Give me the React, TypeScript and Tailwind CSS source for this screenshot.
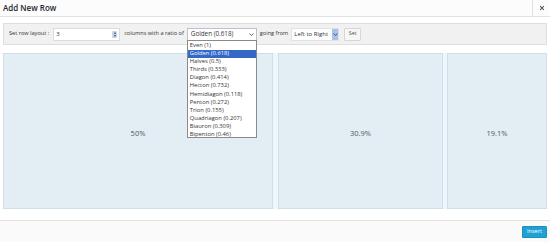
import React from "react";

const ratios = [
  "Even (1)",
  "Golden (0.618)",
  "Halves (0.5)",
  "Thirds (0.333)",
  "Diagon (0.414)",
  "Hecton (0.732)",
  "Hemidiagon (0.118)",
  "Penton (0.272)",
  "Trion (0.155)",
  "Quadriagon (0.207)",
  "Biauron (0.309)",
  "Bipenton (0.46)",
];

function Chevron({ className }: { className?: string }) {
  return (
    <svg viewBox="0 0 8 8" className={className} width="5" height="5">
      <path d="M1 2.5 L4 5.5 L7 2.5" fill="none" stroke="currentColor" strokeWidth="1.6" />
    </svg>
  );
}

export default function App() {
  return (
    <div
      className="w-[550px] h-[242px] bg-white flex flex-col overflow-hidden text-[#333]"
      style={{ fontFamily: '"Open Sans", "Noto Sans", sans-serif' }}
    >
      {/* Header */}
      <div className="h-[17px] shrink-0 flex items-stretch border-b border-[#e2e2e2] bg-[#fcfcfc]">
        <div className="flex-1 pl-[3px] flex items-center text-[8px] font-semibold text-[#23282d] leading-none">
          Add New Row
        </div>
        <div className="w-[18px] border-l border-[#e2e2e2] flex items-center justify-center text-[#555]">
          <svg viewBox="0 0 8 8" width="6" height="6">
            <path d="M1.5 1.5 L6.5 6.5 M6.5 1.5 L1.5 6.5" stroke="currentColor" strokeWidth="1.4" />
          </svg>
        </div>
      </div>

      {/* Toolbar */}
      <div className="mx-[3px] mt-[6px] h-[22px] shrink-0 border border-[#dedede] bg-[#f1f1f1] flex items-center text-[5.6px] leading-none pl-[5px]">
        <span>Set row layout :</span>
        <div className="ml-[4px] w-[67px] h-[13px] bg-white border border-[#dcdcdc] flex items-center pl-[2px] pr-[2px] justify-between">
          <span className="text-[6px]">3</span>
          <div className="w-[5px] h-[7px] rounded-[1px] bg-[#c9d6e6] flex flex-col items-center justify-center gap-[1px]">
            <div className="w-0 h-0 border-l-[1.5px] border-r-[1.5px] border-b-[2px] border-l-transparent border-r-transparent border-b-[#33506f]" />
            <div className="w-0 h-0 border-l-[1.5px] border-r-[1.5px] border-t-[2px] border-l-transparent border-r-transparent border-t-[#33506f]" />
          </div>
        </div>
        <span className="ml-[4px]">columns with a ratio of</span>
        <div className="relative ml-[3px]">
          <div className="w-[70px] h-[13px] bg-white border border-[#b9c3d0] flex items-center justify-between pl-[3px] pr-[1px]">
            <span className="text-[6.3px]">Golden (0.618)</span>
            <div className="w-[6px] h-[9px] flex items-center justify-center text-[#4a6a98]">
              <Chevron />
            </div>
          </div>
          <div className="absolute left-0 top-[12px] w-[70px] h-[98px] bg-white border border-[#8a8a8a] z-10 flex flex-col pt-[1px]">
            {ratios.map((r) => (
              <div
                key={r}
                className={
                  "h-[8.15px] shrink-0 flex items-center pl-[2px] text-[5.8px] leading-none " +
                  (r === "Golden (0.618)" ? "bg-[#3367c8] text-white" : "text-[#333]")
                }
              >
                {r}
              </div>
            ))}
          </div>
        </div>
        <span className="ml-[3px]">going from</span>
        <div className="ml-[3px] w-[48px] h-[13px] bg-white border border-[#e2e2e2] flex items-center justify-between pl-[2px]">
          <span className="text-[6px]">Left to Right</span>
          <div className="w-[6px] h-[11px] bg-[#a9c2ea] flex items-center justify-center text-[#2d4f86]">
            <Chevron />
          </div>
        </div>
        <div className="ml-[5px] w-[17px] h-[13px] bg-[#f7f7f7] border border-[#d6d6d6] rounded-[1px] flex items-center justify-center text-[5.5px] text-[#555]">
          Set
        </div>
      </div>

      {/* Columns */}
      <div className="mx-[3px] mt-[8px] h-[156px] shrink-0 flex">
        <div className="w-[270px] border border-[#cfdfe8] bg-[#e2eef4] flex items-center justify-center pt-[6px] text-[7.5px] text-[#555]">
          50%
        </div>
        <div className="w-[5px] bg-[#ecf6fb]" />
        <div className="w-[165px] border border-[#cfdfe8] bg-[#e2eef4] flex items-center justify-center pt-[6px] text-[7.5px] text-[#555]">
          30.9%
        </div>
        <div className="w-[4px] bg-[#ecf6fb]" />
        <div className="w-[100px] border border-[#cfdfe8] bg-[#e2eef4] flex items-center justify-center pt-[6px] text-[7.5px] text-[#555]">
          19.1%
        </div>
      </div>

      {/* Footer */}
      <div className="mt-[11px] flex-1 border-t border-[#e2e2e2] bg-[#fafafa] flex items-center justify-end pr-[3px]">
        <div className="w-[25px] h-[12px] bg-[#1fa1d4] border border-[#1a8fc0] rounded-[1px] flex items-center justify-center text-[5.5px] text-white">
          Insert
        </div>
      </div>
    </div>
  );
}
